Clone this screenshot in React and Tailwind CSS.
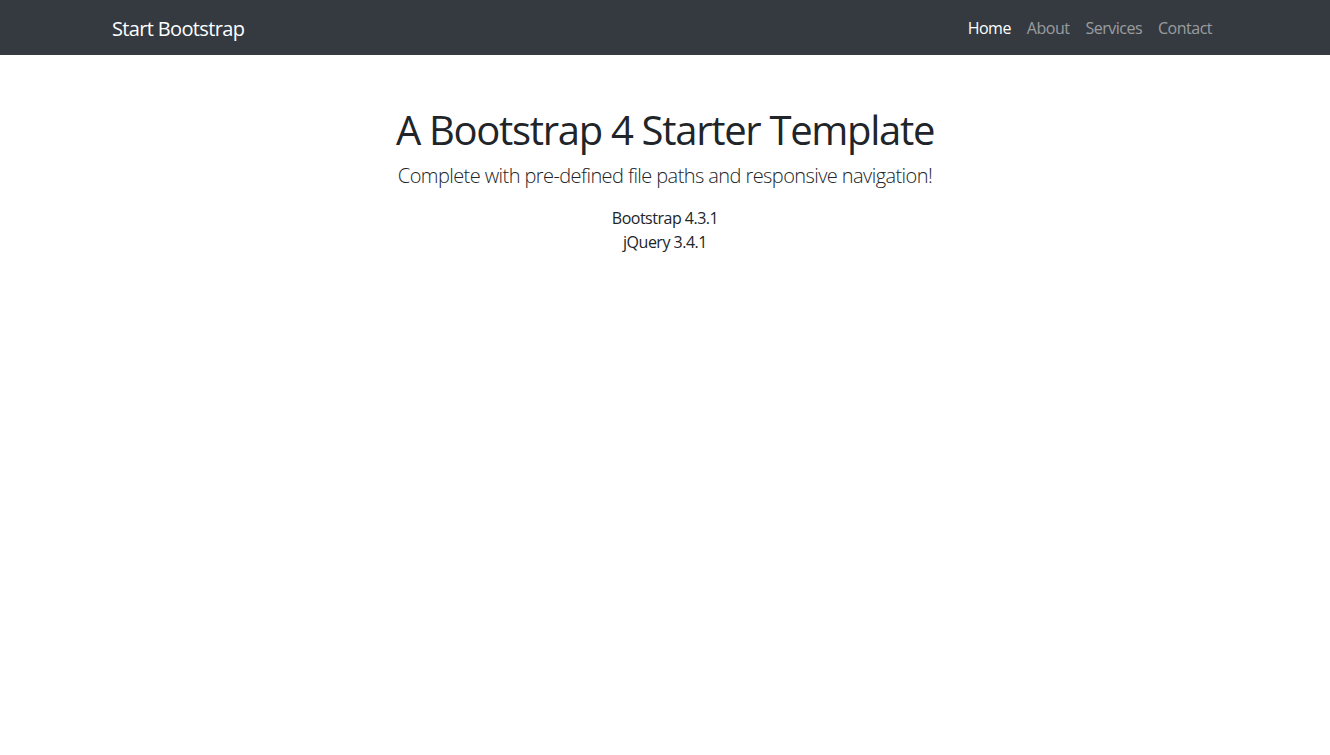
import React from 'react';

const links = ['Home', 'About', 'Services', 'Contact'];

const App = () => {
  return (
    <div className="min-h-screen bg-white text-[#212529] tracking-[-0.5px] font-['Open_Sans',_'Noto_Sans',_sans-serif]">
      <nav className="bg-[#343a40]">
        <div className="mx-auto flex h-[55px] w-[1140px] items-center justify-between px-[15px]">
          <a href="#" className="mt-[3px] pl-[2px] text-[20px] leading-[30px] tracking-[-0.65px] text-white">
            Start Bootstrap
          </a>
          <ul className="flex items-center">
            {links.map((label, i) => (
              <li key={label}>
                <a
                  href="#"
                  className={
                    'block px-2 py-2 text-base leading-6 ' +
                    (i === 0 ? 'text-white' : 'text-white/50 hover:text-white/75')
                  }
                >
                  {label}
                </a>
              </li>
            ))}
          </ul>
        </div>
      </nav>

      <div className="mx-auto w-[1140px] px-[15px] text-center">
        <h1 className="mt-[51px] mb-[7px] text-[40px] leading-[48px] font-normal tracking-[-1.3px]">
          A Bootstrap 4 Starter Template
        </h1>
        <p className="mb-[15px] text-[20px] leading-[30px] font-light tracking-[-0.58px]">
          Complete with pre-defined file paths and responsive navigation!
        </p>
        <ul className="text-base leading-6">
          <li>Bootstrap 4.3.1</li>
          <li>jQuery 3.4.1</li>
        </ul>
      </div>
    </div>
  );
};

export default App;
